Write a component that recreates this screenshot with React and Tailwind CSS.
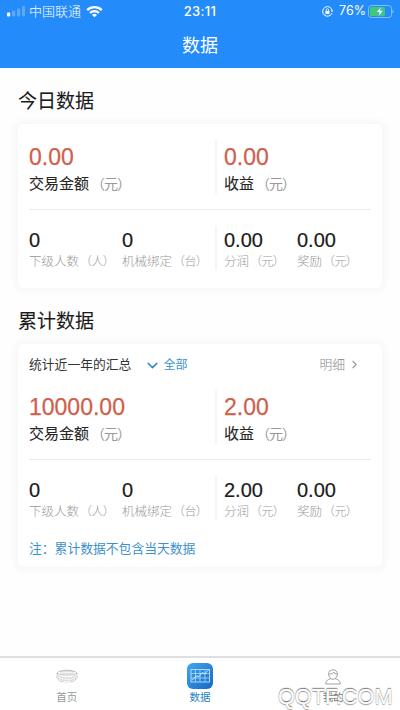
import { ChevronDown, ChevronRight } from "lucide-react";

const today = {
  amount: "0.00",
  income: "0.00",
  items: ["0", "0", "0.00", "0.00"],
};

const total = {
  amount: "10000.00",
  income: "2.00",
  items: ["0", "0", "2.00", "0.00"],
};

function Big({ value, label }) {
  return (
    <div>
      <p className="h-[29px] whitespace-nowrap font-['Liberation_Sans',sans-serif] text-[23px] leading-[28px] text-[#cf604c] [-webkit-text-stroke:0.25px_#cf604c]">{value}</p>
      <p className="h-[22px] whitespace-nowrap text-[15px] leading-[22px] text-[#252525] [-webkit-text-stroke:0.1px_#252525]">
        {label}<span className="ml-[2px] text-[14px] tracking-[-1px] text-[#999] [-webkit-text-stroke:0]">（元）</span>
      </p>
    </div>
  );
}

function Small({ value, label, unit }) {
  return (
    <div>
      <p className="h-[24px] whitespace-nowrap font-['Liberation_Sans',sans-serif] text-[20px] leading-[24px] text-[#1c1c1c] [-webkit-text-stroke:0.2px_#1c1c1c]">{value}</p>
      <p className="h-[18px] whitespace-nowrap text-[12.5px] font-light leading-[18px] text-[#999]">
        {label}<span className="ml-[1px] text-[12px] tracking-[-0.6px]">（{unit}）</span>
      </p>
    </div>
  );
}

function Stats({ data }) {
  return (
    <div className="px-[11px]">
      <div className="flex h-[54px]">
        <div className="w-[188px] border-r-2 border-[#f5f5f5] pt-[3px]">
          <Big value={data.amount} label="交易金额" />
        </div>
        <div className="pl-[7px] pt-[3px]">
          <Big value={data.income} label="收益" />
        </div>
      </div>
      <div className="mb-[16px] mt-[15px] h-px bg-[#ebebeb]" />
      <div className="flex h-[44px]">
        <div className="flex w-[188px] border-r-2 border-[#f5f5f5] pt-[2px]">
          <div className="w-[93px] shrink-0"><Small value={data.items[0]} label="下级人数" unit="人" /></div>
          <Small value={data.items[1]} label="机械绑定" unit="台" />
        </div>
        <div className="flex pl-[7px] pt-[2px]">
          <div className="w-[73px] shrink-0"><Small value={data.items[2]} label="分润" unit="元" /></div>
          <Small value={data.items[3]} label="奖励" unit="元" />
        </div>
      </div>
    </div>
  );
}

function StatusBar() {
  return (
    <div className="grid h-[22px] grid-cols-3 items-center text-[13px] leading-[22px]">
      <div className="flex items-center pl-[7px]">
        <svg width="18" height="12" viewBox="0 0 18 12" fill="#fff">
          <rect x="0" y="7.5" width="3.2" height="4" rx="1" />
          <rect x="5" y="5.5" width="3.2" height="6" rx="1" opacity=".25" />
          <rect x="10" y="3.5" width="3.2" height="8" rx="1" opacity=".25" />
          <rect x="15" y="1" width="3" height="10.5" rx="1" opacity=".25" />
        </svg>
        <span className="ml-[4px] font-light">中国联通</span>
        <svg className="ml-[5px]" width="17" height="13" viewBox="0 0 17 13" fill="none" stroke="#fff" strokeWidth="2.2">
          <path d="M1.2 5.1a10.4 10.4 0 0 1 14.6 0" />
          <path d="M4 8a6.4 6.4 0 0 1 9 0" />
          <path d="M8.5 12.3 6 9.9a3.6 3.6 0 0 1 5 0z" fill="#fff" stroke="none" />
        </svg>
      </div>
      <span className="text-center font-['Inter',sans-serif] text-[13px] font-medium tracking-[0.3px]">23:11</span>
      <div className="flex items-center justify-end pr-[6px]">
        <svg width="11" height="11" viewBox="0 0 11 11" fill="none" stroke="#fff">
          <path d="M9.9 7.2A4.8 4.8 0 1 1 10.2 4.8" />
          <path d="M8.6 4.4h2.2L10.2 6.4z" fill="#fff" stroke="none" />
          <rect x="3.4" y="5" width="4" height="3" fill="#fff" stroke="none" />
          <path d="M4.2 5V4a1.2 1.2 0 0 1 2.4 0v1" strokeWidth=".8" />
        </svg>
        <span className="ml-[6px] font-['Inter',sans-serif] text-[12.5px]">76%</span>
        <svg className="ml-[2px]" width="26" height="13" viewBox="0 0 26 13">
          <rect x=".5" y=".5" width="23" height="12" rx="3" fill="none" stroke="#7fc0ff" />
          <rect x="2" y="2" width="15" height="9" rx="1.5" fill="#3fcb76" />
          <path d="M24.5 4.5v4c1.4-.5 1.4-3.5 0-4z" fill="#8fc7ff" />
          <path d="M13.2 1.3 8.2 7.3h3l-.9 4.5 5.1-6.2h-3z" fill="#fff" stroke="#248bfb" strokeWidth=".5" />
        </svg>
      </div>
    </div>
  );
}

function HomeIcon() {
  return (
    <svg width="22" height="15" viewBox="0 0 22 15" fill="none" stroke="#b0b0b0" strokeWidth=".8">
      <path d="M1 4C4 .3 18 .3 21 4" />
      <path d="M1 4.2c4 2.6 16 2.6 20 0M1 4v5c1 2 4 3.7 6 4V8M21 4v5c-1 2-4 3.7-6 4V8" strokeDasharray="2.5 .6" />
      <path d="M3 6v5M5 7v5M9 8v5.5M11 8v5.5M13 8v5.5M17 7v5M19 6v5M5 2v3M7 1.6v4M9 1.4v4M11 1.3v4M13 1.4v4M15 1.6v4M17 2v3" strokeDasharray="1.8 .7" />
    </svg>
  );
}

function DataIcon() {
  return (
    <svg width="26" height="26" viewBox="0 0 26 26" fill="none">
      <defs>
        <linearGradient id="tab" x1="0" y1="0" x2="1" y2="1">
          <stop stopColor="#43a6ed" />
          <stop offset="1" stopColor="#1768c4" />
        </linearGradient>
      </defs>
      <rect width="26" height="26" rx="6" fill="url(#tab)" />
      <g stroke="#b6e0ff" strokeWidth=".9">
        <rect x="4" y="6.5" width="18.5" height="12.5" />
        <path d="M4 10.5h18M4 15h18M8.5 6.5V19M13 6.5V19M18 6.5V19" opacity=".8" />
        <path d="M5 17.5 9 13l3 .5 3.5-4 2 1.5 4-4" stroke="#e1f3ff" />
      </g>
    </svg>
  );
}

function MineIcon() {
  return (
    <svg width="16" height="16" viewBox="0 0 16 16" fill="none" stroke="#999" strokeWidth=".9">
      <path d="M3.6 4.8C3.6 2.3 5.4.8 8 .8s4.4 1.5 4.4 4C12.4 8 10.3 10.3 8 10.3S3.6 8 3.6 4.8z" />
      <path d="M3.8 5c2.7.2 4.2-.6 5-1.8.5 1.2 1.5 1.8 3.4 1.8M5.8 9.7C3 10.5.7 11.6.7 15h14.6c0-3.4-2.3-4.5-5.1-5.3" />
    </svg>
  );
}

const card = "rounded-[5px] bg-white shadow-[0_0_7px_3px_rgba(0,0,0,0.035)]";
const heading = "pt-[18px] text-[19px] leading-[28px] text-[#1a1a1a] [-webkit-text-stroke:0.1px_#1a1a1a]";

export default function App() {
  return (
    <div className="flex h-[710px] w-[400px] flex-col overflow-hidden bg-[#fefefe] font-['Noto_Sans_CJK_SC',sans-serif]">
      <header className="h-[68px] shrink-0 bg-[#248bfb] text-white">
        <StatusBar />
        <h1 className="text-center text-[18px] leading-[45px]">数据</h1>
      </header>

      <main className="flex-1 px-[18px]">
        <h2 className={heading}>今日数据</h2>
        <section className={`mt-[10px] h-[164px] pt-[16px] ${card}`}>
          <Stats data={today} />
        </section>

        <h2 className={heading}>累计数据</h2>
        <section className={`mt-[10px] h-[223px] ${card}`}>
          <div className="flex h-[46px] items-center px-[11px] pb-[6px] text-[12.8px]">
            <span className="text-[#333]">统计近一年的汇总</span>
            <ChevronDown className="ml-[13px] mt-[2px]" size={17} strokeWidth={2} color="#2f8bc9" />
            <span className="ml-[2px] text-[12px] text-[#3b91cd]">全部</span>
            <span className="ml-auto text-[12.8px] font-light text-[#888]">明细</span>
            <ChevronRight className="ml-[3px] mr-[10px]" size={13} strokeWidth={2} color="#999" />
          </div>
          <Stats data={total} />
          <p className="mt-[18px] px-[11px] text-[12.8px] leading-[20px] text-[#3b91cd]">注：累计数据不包含当天数据</p>
        </section>
      </main>

      <nav className="relative grid h-[54px] shrink-0 grid-cols-3 border-t-2 border-[#dfdfdf] bg-white text-center text-[10.5px] leading-[14px] text-[#999]">
        <div className="flex flex-col items-center">
          <div className="flex h-[32px] items-center pt-[5px]"><HomeIcon /></div>
          <span>首页</span>
        </div>
        <div className="flex flex-col items-center text-[#2783c8]">
          <div className="flex h-[32px] items-center pt-[4px]"><DataIcon /></div>
          <span>数据</span>
        </div>
        <div className="flex flex-col items-center">
          <div className="flex h-[32px] items-center pt-[5px]"><MineIcon /></div>
          <span className="text-[#777]">我的</span>
        </div>
        <span className="absolute left-[278px] top-[27px] whitespace-nowrap font-['Liberation_Sans',sans-serif] text-[21.7px] leading-[24px] text-white [-webkit-text-stroke:0.4px_#fff] [text-shadow:0_-1px_1px_#555,0_1px_1px_#888]">QQTF.COM</span>
      </nav>
    </div>
  );
}
